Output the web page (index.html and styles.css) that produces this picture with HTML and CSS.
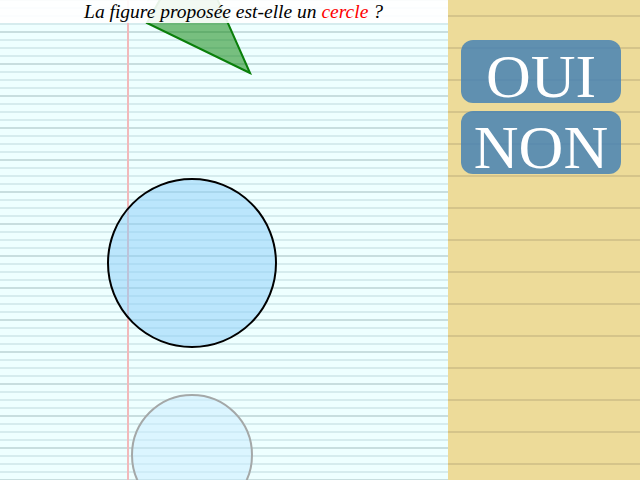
FILE: index.html
```html
<!DOCTYPE html>
<html lang="fr">
<head>
<meta charset="utf-8">
<title>Cercle ?</title>
<link rel="stylesheet" href="styles.css">
</head>
<body>
<div class="app">
  <section class="paper">
    <svg class="figure" width="448" height="480" viewBox="0 0 448 480">
      <polygon points="250,73 147,23 192,-58" class="tri"/>
      <circle cx="192" cy="263" r="84" class="circle-main"/>
      <circle cx="192" cy="455" r="60" class="circle-ghost"/>
    </svg>
    <header class="question">La figure proposée est-elle un <span class="key">cercle</span> ?</header>
  </section>
  <aside class="answers">
    <button class="answer">OUI</button>
    <button class="answer">NON</button>
  </aside>
</div>
</body>
</html>
```

FILE: styles.css
```css
html, body {
  margin: 0;
  padding: 0;
  width: 640px;
  height: 480px;
  overflow: hidden;
}

.app {
  display: grid;
  grid-template-columns: 448px 192px;
  height: 480px;
}

.paper {
  position: relative;
  height: 480px;
  background-color: #eeffff;
  background-image:
    linear-gradient(to right, transparent 0 127px, #f2b9bb 127px 129px, transparent 129px),
    linear-gradient(to bottom, #c8dedf 0 1px, transparent 1px 31px, #c8dedf 31px 32px),
    linear-gradient(to bottom, #d6ecee 0 1px, transparent 1px 7px, #d6ecee 7px 8px);
  background-size: 100% 100%, 100% 32px, 100% 8px;
  background-repeat: no-repeat, repeat-y, repeat-y;
  overflow: hidden;
}

.figure {
  position: absolute;
  left: 0;
  top: 0;
}

.tri {
  fill: rgba(0, 128, 0, 0.5);
  stroke: #0a7f0a;
  stroke-width: 2;
  stroke-linejoin: miter;
}

.circle-main {
  fill: rgba(135, 206, 250, 0.5);
  stroke: #000;
  stroke-width: 2;
}

.circle-ghost {
  fill: rgba(200, 236, 255, 0.5);
  stroke: #a4a8a8;
  stroke-width: 2;
}

.question {
  position: relative;
  height: 23px;
  background: rgba(255, 255, 255, 0.9);
  font-family: "Liberation Serif", serif;
  font-style: italic;
  font-size: 19.5px;
  line-height: 23px;
  text-align: center;
  padding-left: 19px;
  color: #000;
  white-space: nowrap;
}

.key {
  color: #ff0000;
}

.answers {
  background-color: #eddb99;
  background-image: linear-gradient(to bottom, transparent 0 15px, #d5c48a 15px 17px, transparent 17px);
  background-size: 100% 32px;
  display: flex;
  flex-direction: column;
  gap: 8px;
  padding: 40px 0 0 13px;
}

.answer {
  width: 160px;
  height: 63px;
  box-sizing: border-box;
  border: none;
  border-radius: 12px;
  background: rgba(70, 130, 180, 0.85);
  color: #fff;
  font-family: "Liberation Serif", serif;
  font-size: 62px;
  line-height: 53px;
  padding: 10px 0 0 0;
  text-align: center;
  cursor: pointer;
}
```
